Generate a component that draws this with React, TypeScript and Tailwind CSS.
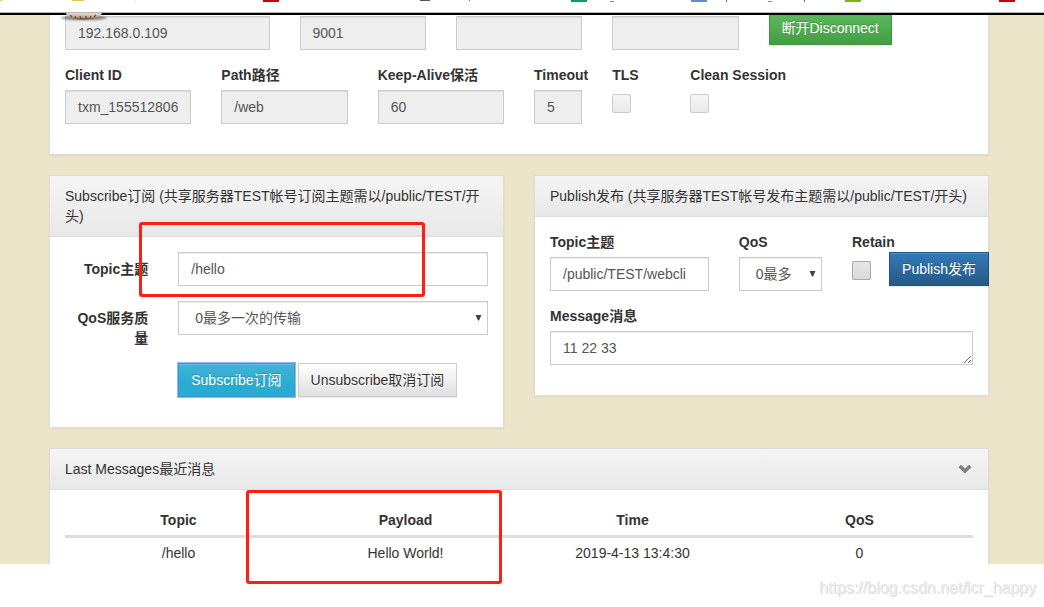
import { ReactNode } from 'react';

const inputClass =
  'h-[34px] w-full min-w-0 border border-[#ccc] px-3 text-sm text-[#555] shadow-[inset_0_1px_1px_rgba(0,0,0,0.075)] outline-none';
const lockedClass = `${inputClass} bg-[#eee]`;
const buttonClass =
  'h-[34px] whitespace-nowrap border px-3 text-sm leading-5 shadow-[inset_0_1px_0_rgba(255,255,255,0.15),0_1px_1px_rgba(0,0,0,0.075)]';
const checkClass =
  'mt-[9px] block size-[19px] appearance-none rounded-xs border bg-linear-to-b';

function Field({ id, label, className, children }: { id: string; label: string; className?: string; children: ReactNode }) {
  return (
    <div className={className}>
      <label htmlFor={id} className="mb-[5px] block font-bold whitespace-nowrap">{label}</label>
      {children}
    </div>
  );
}

function Panel({ title, action, className = 'border', children }: { title: string; action?: ReactNode; className?: string; children: ReactNode }) {
  return (
    <section className={`${className} border-[#ddd] bg-white shadow-[0_1px_2px_rgba(0,0,0,0.05)]`}>
      <header className="flex items-center justify-between border-b border-[#ddd] bg-linear-to-b from-[#f5f5f5] to-[#e8e8e8] px-[15px] py-[10px]">
        <h3>{title}</h3>
        {action}
      </header>
      {children}
    </section>
  );
}

// bottom edge of the browser's bookmark bar
function BookmarkBar() {
  return (
    <div className="h-[15px] overflow-hidden border-b-2 border-black bg-white">
      <svg width="100%" height="13" shapeRendering="crispEdges" aria-hidden="true">
        <rect x="0" width="2" height="1" fill="#f0c94b" />
        <rect x="72" width="12" height="1" fill="#e8c44e" />
        <rect x="134" width="2" height="1" fill="#eee" />
        <rect x="263" width="16" height="2" fill="#cc0000" />
        <rect x="420" width="10" height="1" fill="#555" />
        <rect x="469" width="1" height="1" fill="#667" />
        <rect x="571" width="16" height="2" fill="#0c9d63" />
        <rect x="610" y="1" width="4" height="1" fill="#889" />
        <rect x="691" width="16" height="2" fill="#6688d3" />
        <rect x="726" width="1" height="2" fill="#669" />
        <rect x="768" y="1" width="4" height="1" fill="#889" />
        <rect x="804" width="1" height="2" fill="#669" />
        <rect x="845" width="16" height="2" fill="#76b813" />
        <rect x="999" width="16" height="2" fill="#cc0000" />
        <rect y="12" width="100%" height="1" fill="#b5b5b8" />
      </svg>
    </div>
  );
}

function Connection() {
  return (
    <section className="border border-t-0 border-[#ddd] bg-white px-[15px] pb-[30px] shadow-[0_1px_2px_rgba(0,0,0,0.05)]">
      <div className="mb-[15px] grid grid-cols-12 gap-x-[30px]">
        <input aria-label="Host" className={`${lockedClass} col-span-3 mt-px`} value="192.168.0.109" readOnly />
        <input aria-label="Port" className={`${lockedClass} col-span-2 mt-px`} value="9001" readOnly />
        <input aria-label="Username" className={`${lockedClass} col-span-2 mt-px`} value="" readOnly />
        <input aria-label="Password" type="password" className={`${lockedClass} col-span-2 mt-px`} value="" readOnly />
        <div className="col-span-3">
          <button className="h-[30px] border border-t-0 border-[#419641] bg-linear-to-b from-[#5cb85c] to-[#449d44] px-3 pb-1 text-sm leading-5 whitespace-nowrap text-white shadow-[0_1px_1px_rgba(0,0,0,0.075)] text-shadow-[0_-1px_0_rgba(0,0,0,0.2)]">断开Disconnect</button>
        </div>
      </div>
      <div className="grid grid-cols-12 gap-x-[30px]">
        <Field id="client" label="Client ID" className="col-span-2">
          <input id="client" className={lockedClass} value="txm_155512806" readOnly />
        </Field>
        <Field id="path" label="Path路径" className="col-span-2">
          <input id="path" className={lockedClass} value="/web" readOnly />
        </Field>
        <Field id="keepalive" label="Keep-Alive保活" className="col-span-2">
          <input id="keepalive" className={lockedClass} value="60" readOnly />
        </Field>
        <Field id="timeout" label="Timeout" className="col-span-1">
          <input id="timeout" className={lockedClass} value="5" readOnly />
        </Field>
        <Field id="tls" label="TLS" className="col-span-1">
          <input id="tls" type="checkbox" disabled className={`${checkClass} border-[#ccc] from-[#f5f5f5] to-[#eaeaea]`} />
        </Field>
        <Field id="clean" label="Clean Session" className="col-span-2">
          <input id="clean" type="checkbox" disabled className={`${checkClass} border-[#ccc] from-[#f5f5f5] to-[#eaeaea]`} />
        </Field>
      </div>
    </section>
  );
}

function Arrow() {
  return (
    <svg width="7" height="6" viewBox="0 0 7 6" className="pointer-events-none absolute top-[14px] right-[6px]" aria-hidden="true">
      <path d="M.5 0h6L4 5.500H3z" fill="#444" />
    </svg>
  );
}

function Subscribe() {
  return (
    <Panel title="Subscribe订阅 (共享服务器TEST帐号订阅主题需以/public/TEST/开头)">
      <form className="px-[15px] pt-[15px] pb-[30px]">
        <div className="mb-[15px] grid grid-cols-12 gap-x-[30px]">
          <label htmlFor="subTopic" className="col-span-3 pt-[7px] text-right font-bold">Topic主题</label>
          <input id="subTopic" className={`${inputClass} col-span-9`} defaultValue="/hello" />
        </div>
        <div className="mb-[15px] grid grid-cols-12 gap-x-[30px]">
          <label htmlFor="subQos" className="col-span-3 pt-[7px] text-right font-bold break-all">QoS服务质量</label>
          <div className="relative col-span-9">
            <select id="subQos" className={`${inputClass} appearance-none bg-white pl-4`}>
              <option>0最多一次的传输</option>
              <option>1至少一次的传输</option>
              <option>2只有一次的传输</option>
            </select>
            <Arrow />
          </div>
        </div>
        <div className="grid grid-cols-12 gap-x-[30px]">
          <div className="col-span-9 col-start-4 flex gap-[3px]">
            <button type="button" className={`${buttonClass} border-[#3a96e0] bg-linear-to-b from-[#43b3d8] to-[#2aabd2] to-60% text-white outline outline-[#8fb8f5] text-shadow-[0_-1px_0_rgba(0,0,0,0.2)]`}>Subscribe订阅</button>
            <button type="button" className={`${buttonClass} border-[#ccc] bg-linear-to-b from-white to-[#e0e0e0] text-[#333] text-shadow-[0_1px_0_#fff]`}>Unsubscribe取消订阅</button>
          </div>
        </div>
      </form>
    </Panel>
  );
}

function Publish() {
  return (
    <Panel title="Publish发布 (共享服务器TEST帐号发布主题需以/public/TEST/开头)">
      <form className="px-[15px] pt-[15px] pb-[30px]">
        <div className="mb-[15px] grid grid-cols-12 gap-x-[30px]">
          <Field id="pubTopic" label="Topic主题" className="col-span-5">
            <input id="pubTopic" className={inputClass} defaultValue="/public/TEST/webcli" />
          </Field>
          <Field id="pubQos" label="QoS" className="col-span-3">
            <div className="relative">
              <select id="pubQos" className={`${inputClass} appearance-none bg-white pr-7 pl-4`}>
                <option>0最多</option>
                <option>1至少</option>
                <option>2只有</option>
              </select>
              <Arrow />
            </div>
          </Field>
          <Field id="retain" label="Retain" className="col-span-2">
            <input id="retain" type="checkbox" className={`${checkClass} border-[#aaa] from-[#e6e6e6] to-[#dadada]`} />
          </Field>
          <div className="col-span-2 -mr-4 flex justify-end pt-5">
            <button type="button" className={`${buttonClass} border-[#245580] bg-linear-to-b from-[#337ab7] to-[#265a88] text-white text-shadow-[0_-1px_0_rgba(0,0,0,0.2)]`}>Publish发布</button>
          </div>
        </div>
        <Field id="message" label="Message消息">
          <textarea id="message" rows={1} className={`${inputClass} block py-[6px] leading-5`} defaultValue="11 22 33" />
        </Field>
      </form>
    </Panel>
  );
}

function Messages() {
  return (
    <Panel
      title="Last Messages最近消息"
      className="border border-b-0"
      action={
        <button aria-label="Collapse" className="text-[#808080]">
          <svg width="15" height="10" viewBox="0 0 15 10" fill="none" aria-hidden="true">
            <path d="M1.700 2l5.300 5 5.300-5" stroke="currentColor" strokeWidth="3.600" />
          </svg>
        </button>
      }
    >
      <div className="px-[15px] pt-[15px] pb-px">
        <table className="w-full table-fixed text-center">
          <thead>
            <tr className="border-b-[3px] border-[#ddd]">
              <th className="p-[5px]">Topic</th>
              <th className="p-[5px]">Payload</th>
              <th className="p-[5px]">Time</th>
              <th className="p-[5px]">QoS</th>
            </tr>
          </thead>
          <tbody>
            <tr>
              <td className="pt-[5px]">/hello</td>
              <td className="pt-[5px]">Hello World!</td>
              <td className="pt-[5px]">2019-4-13 13:4:30</td>
              <td className="pt-[5px]">0</td>
            </tr>
          </tbody>
        </table>
      </div>
    </Panel>
  );
}

export default function App() {
  return (
    <div className="relative overflow-hidden bg-white font-['Liberation_Sans','Noto_Sans_CJK_SC',sans-serif] text-sm leading-5 text-[#333]">
      <BookmarkBar />
      <main className="overflow-hidden bg-[#ede5ca] pr-[55px] pl-[49px]">
        <Connection />
        <div className="my-5 grid grid-cols-2 items-start gap-[30px]">
          <Subscribe />
          <Publish />
        </div>
        <Messages />
      </main>
      <footer className="px-2 pt-3 pb-4 text-right text-base leading-6 text-[#ebebeb] text-shadow-[1px_1px_0_#e0e0e0]">https://blog.csdn.net/lcr_happy</footer>

      {/* mascot's foot hanging below the bar */}
      <svg width="54" height="10" viewBox="0 0 54 10" className="absolute top-[12px] left-[58px]" aria-hidden="true">
        <defs>
          <filter id="soft" x="-10%" y="-60%" width="120%" height="220%">
            <feGaussianBlur stdDeviation="1" />
          </filter>
          <linearGradient id="foot" x2="0" y2="1">
            <stop offset="0" stopColor="#e9ddd0" />
            <stop offset="0.5" stopColor="#cdb59f" />
            <stop offset="1" stopColor="#6b4a35" />
          </linearGradient>
        </defs>
        <ellipse cx="26" cy="6" rx="23" ry="2" fill="#000" opacity="0.5" filter="url(#soft)" />
        <path d="M8 1h36c-1 3-6 6-18 6.500C14 7.500 9 5 8 1z" fill="url(#foot)" />
        <path d="M12 3l2 2M17 4l1 2.500M22 4l1 3M28 4v3M33 4l-1 2.500M38 3l-2 2" stroke="#5a3723" strokeWidth="1.200" opacity="0.8" />
      </svg>

      {/* highlight marks */}
      <div className="pointer-events-none absolute top-[222px] left-[139px] h-[75px] w-[286px] rounded-[3px] border-3 border-[#ff1e10]" />
      <div className="pointer-events-none absolute top-[490px] left-[246px] h-[94px] w-[256px] rounded-[3px] border-3 border-[#ff1e10]" />
    </div>
  );
}
